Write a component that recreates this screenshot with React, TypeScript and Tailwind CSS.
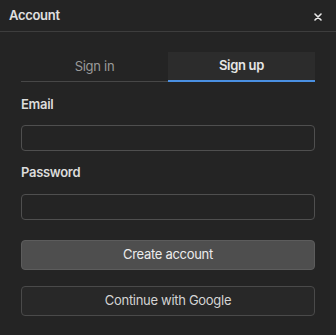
import React, { useState } from 'react';

const font = { fontFamily: 'Inter, "Noto Sans", sans-serif' };

const App: React.FC = () => {
    const [tab, setTab] = useState<'signin' | 'signup'>('signup');

    return (
        <div className="w-[336px] h-[335px] bg-[#242424] text-[#e6e6e6]" style={font}>
            <div className="h-[32px] px-[9px] flex items-center justify-between border-b border-[#3d3d3d]">
                <span className="text-[13px] font-semibold tracking-[-0.3px] text-[#e0e0e0]">Account</span>
                <button className="w-[12px] h-[12px] flex items-center justify-center mr-[3px] mt-[2px] text-[#e8e8e8]">
                    <svg width="8" height="8" viewBox="0 0 8 8" fill="none">
                        <path d="M1 1L7 7M7 1L1 7" stroke="currentColor" strokeWidth="1.6" strokeLinecap="round" />
                    </svg>
                </button>
            </div>

            <div className="px-[21px] pt-[20px]">
                <div className="grid grid-cols-2">
                    <button
                        onClick={() => setTab('signin')}
                        className={`h-[30px] text-[13px] tracking-[-0.3px] ${tab === 'signin' ? 'bg-[#2c2c2c] border-b-2 border-[#4a90e2] text-[#e6e6e6] font-semibold' : 'border-b border-[#474747] text-[#9a9a9a] pt-[1px]'}`}
                    >
                        Sign in
                    </button>
                    <button
                        onClick={() => setTab('signup')}
                        className={`h-[30px] text-[13px] tracking-[-0.3px] ${tab === 'signup' ? 'bg-[#2c2c2c] border-b-2 border-[#4a90e2] text-[#e6e6e6] font-semibold' : 'border-b border-[#474747] text-[#9a9a9a] pt-[1px]'}`}
                    >
                        Sign up
                    </button>
                </div>

                <label className="block mt-[13px] h-[18px] leading-[18px] text-[13px] font-semibold tracking-[-0.3px] text-[#dcdcdc]">Email</label>
                <input
                    type="email"
                    className="block mt-[12px] w-full h-[26px] rounded-[4px] border border-[#4f4f4f] bg-[#242424] px-2 text-[13px] outline-none"
                />

                <label className="block mt-[12px] h-[18px] leading-[18px] text-[13px] font-semibold tracking-[-0.3px] text-[#dcdcdc]">Password</label>
                <input
                    type="password"
                    className="block mt-[13px] w-full h-[26px] rounded-[4px] border border-[#4f4f4f] bg-[#242424] px-2 text-[13px] outline-none"
                />

                <button className="block mt-[20px] w-full h-[30px] rounded-[4px] border border-[#5c5c5c] bg-[#4e4e4e] text-[13px] tracking-[-0.3px] text-[#ececec]">
                    Create account
                </button>
                <button className="block mt-[16px] w-full h-[30px] rounded-[4px] border border-[#4a4a4a] bg-[#282828] text-[13px] tracking-[-0.3px] text-[#d4d4d4]">
                    Continue with Google
                </button>
            </div>
        </div>
    );
};

export default App;
